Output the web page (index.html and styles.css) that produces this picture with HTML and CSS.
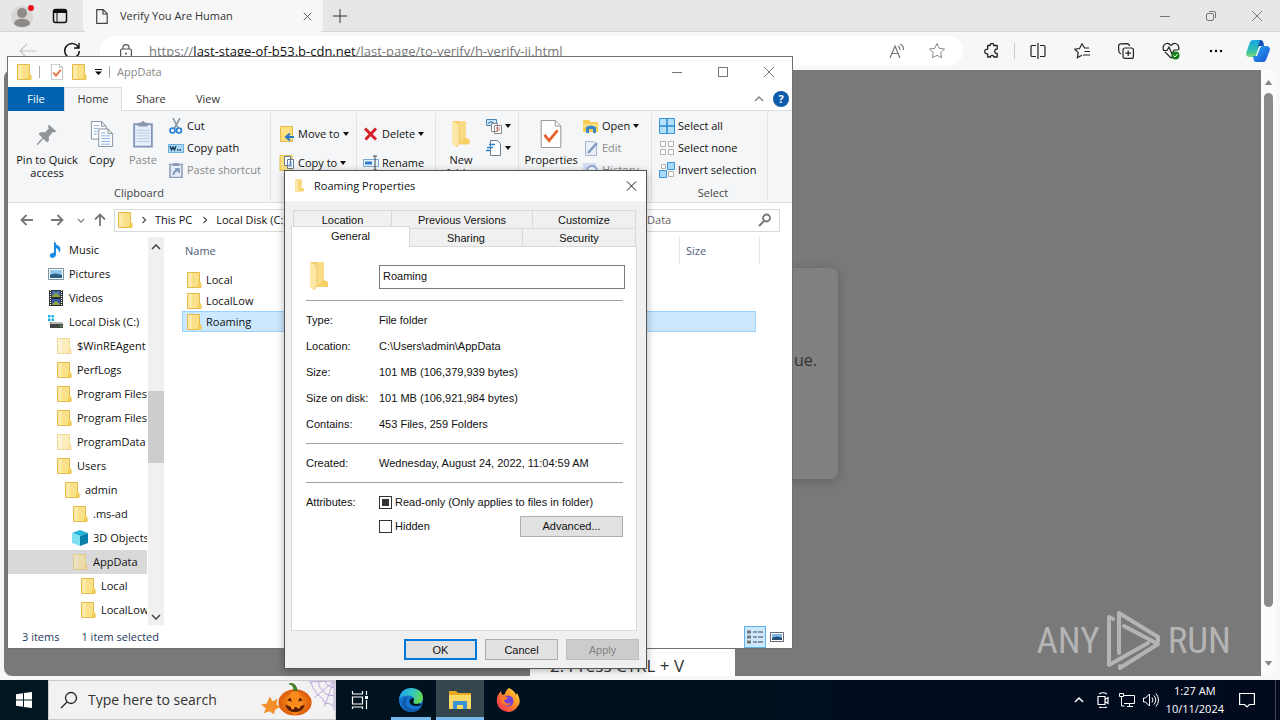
FILE: index.html
```html
<!DOCTYPE html>
<html lang="en">
<head>
<meta charset="utf-8">
<title>Desktop</title>
<link rel="stylesheet" href="styles.css">
</head>
<body>
<svg class="sprite" aria-hidden="true">
  <symbol id="folder" viewBox="-1 0 16 16"><path d="M.5.500h12v10l1.500.8v4.200H.5z" fill="#fbe08a" stroke="#e3bb4b"/><path d="M1 1h4v14H1z" fill="#fdeaa8"/><path d="M12 9.500l-1.500 6H14v-4.500z" fill="#f3cb55"/></symbol>
  <symbol id="bigfolder" viewBox="0 0 20 30"><path d="M1 1h14v18l4 2v5H1z" fill="#f3cd68"/><path d="M8 1h7v24H8z" fill="#fadb86"/><path d="M1 1l7 4v20l-3 4-4-3z" fill="#fde7a6"/><path d="M8 5v20l-3 4" fill="none" stroke="#efc763"/><path d="M14 19l5 2v5H8z" fill="#f7cf66"/></symbol>
  <symbol id="check" viewBox="0 0 24 30"><path d="M1.500.5h15l6 6v23h-21z" fill="#fff" stroke="#8d8d8d"/><path d="M16.500.5v6h6" fill="none" stroke="#8d8d8d"/><path d="M5 16l5 6L19 11" fill="none" stroke="#e4622a" stroke-width="3"/></symbol>
  <symbol id="close" viewBox="0 0 12 12"><path d="M1 1l10 10M11 1L1 11" fill="none" stroke="currentColor"/></symbol>
  <symbol id="caret" viewBox="0 0 6 4"><path d="M0 0h6L3 4z" fill="currentColor"/></symbol>
  <symbol id="up" viewBox="0 0 10 6"><path d="M1 5l4-4 4 4" fill="none" stroke="currentColor" stroke-width="1.500"/></symbol>
  <symbol id="down" viewBox="0 0 10 6"><path d="M1 1l4 4 4-4" fill="none" stroke="currentColor" stroke-width="1.500"/></symbol>
  <symbol id="right" viewBox="0 0 6 8"><path d="M1.500 1l3 3-3 3" fill="none" stroke="currentColor" stroke-width="1.300"/></symbol>
  <symbol id="arrow" viewBox="0 0 14 12"><path d="M13 6H2M6.500 1L1.500 6l5 5" fill="none" stroke="currentColor" stroke-width="1.800"/></symbol>
  <symbol id="star" viewBox="0 0 18 18"><path d="M9 1.500l2.300 4.800 5.200.7-3.800 3.600.9 5.200L9 13.300l-4.600 2.500.9-5.200L1.500 7l5.200-.7z" fill="none" stroke="currentColor" stroke-linejoin="round"/></symbol>
</svg>

<main class="desktop">
  <section class="browser">
    <header class="tabstrip">
      <svg class="avatar" viewBox="0 0 28 28"><circle cx="12" cy="15" r="11" fill="#d9d7d5"/><circle cx="12" cy="11" r="5" fill="#8d8a88"/><path d="M4 22c0-7 16-7 16 0-3 4-13 4-16 0z" fill="#8d8a88"/><circle cx="21" cy="6" r="3" fill="#e3141b"/></svg>
      <svg class="i16 tabact" viewBox="0 0 16 16"><rect x="1.500" y="1.500" width="13" height="13" rx="2" fill="none" stroke="#111" stroke-width="1.500"/><path d="M1 2h14v3H1z" fill="#111"/><path d="M5 5v9" stroke="#111"/></svg>
      <div class="btab">
        <svg class="page" viewBox="0 0 12 15"><path d="M.7.7h6.500l4 4v9.600H.7zM7 .7v4.300h4.300" fill="none" stroke="#444" stroke-width="1.200"/></svg>
        <span>Verify You Are Human</span>
        <button class="bare" aria-label="Close tab"><svg class="i9"><use href="#close"/></svg></button>
      </div>
      <button class="bare plus" aria-label="New tab"><svg class="i14" viewBox="0 0 14 14"><path d="M7 0v14M0 7h14" stroke="#333"/></svg></button>
      <div class="wctl">
        <button class="bare" aria-label="Minimize"><svg class="i12" viewBox="0 0 12 12"><path d="M1 6.500h10" stroke="#777"/></svg></button>
        <button class="bare" aria-label="Restore"><svg class="i12" viewBox="0 0 12 12"><rect x="1.500" y="3.500" width="7" height="7" rx="1.500" fill="none" stroke="#777"/><path d="M4 1.500h5q1.500 0 1.500 1.500v5" fill="none" stroke="#777"/></svg></button>
        <button class="bare" aria-label="Close"><svg class="i12"><use href="#close"/></svg></button>
      </div>
    </header>
    <div class="toolbar">
      <svg class="i18 back" viewBox="0 0 18 18"><path d="M17 9H1M8 2L1 9l7 7" fill="none" stroke="#c4c4c4" stroke-width="1.200"/></svg>
      <svg class="i18" viewBox="0 0 18 18"><path d="M15.500 5.500A7.300 7.300 0 1 0 16.300 9M16 1v5h-5" fill="none" stroke="#111" stroke-width="1.400"/></svg>
      <div class="omni">
        <svg class="lock" viewBox="0 0 12 15"><rect x=".6" y="5" width="10.800" height="9" rx="1.500" fill="none" stroke="#555" stroke-width="1.200"/><path d="M3 5V3q0-2.400 3-2.400T9 3v2" fill="none" stroke="#555" stroke-width="1.200"/><circle cx="6" cy="9.500" r="1" fill="#555"/></svg>
        <p class="url">https://<b>last-stage-of-b53.b-cdn.net</b>/last-page/to-verify/h-verify-ii.html</p>
        <svg class="i16" viewBox="0 0 16 16"><path d="M1 15L6 3l5 12M3 10.500h6M9 3q2 1 2 4M11 1q4 2 3.500 6" fill="none" stroke="#777" stroke-width="1.200"/></svg>
        <svg class="i18 grey"><use href="#star"/></svg>
      </div>
      <div class="tools">
        <svg class="i16" viewBox="0 0 16 16"><path d="M3.500 2.500H6q-.2-2 1.800-2t1.700 2h3.500V6q-2.500-.2-2.500 2.200T13 10.500V14H9.500q.2-1.500-1.600-1.500T6.300 14H3.500v-3.200Q.5 11 .5 8.500t3-2.300z" transform="translate(1.200)" fill="none" stroke="#222" stroke-width="1.300" stroke-linejoin="round"/></svg>
        <i class="tsep"></i>
        <svg class="i16" viewBox="0 0 16 16"><path d="M6 2.500H2q-1 0-1 1v9q0 1 1 1h4M8 0v16M10 2.500h4q1 0 1 1v9q0 1-1 1h-4" fill="none" stroke="#222" stroke-width="1.200"/></svg>
        <svg class="i16" viewBox="0 0 16 16"><path d="M15 5h-4.500L8 .8 5.500 5.500.8 6.300l3.400 3.400-.8 5L8 12.300M10.500 8.500H16M9 12h7" fill="none" stroke="#222" stroke-width="1.200"/></svg>
        <svg class="i16" viewBox="0 0 16 16"><rect x="5" y="5" width="10.400" height="10.400" rx="2" fill="none" stroke="#222" stroke-width="1.200"/><path d="M10.200 7.500v5.400M7.500 10.200h5.400M3 11Q1 10 .8 8L.6 3Q.6 1 2.500.8L9 .6Q11 .6 11.500 3" fill="none" stroke="#222" stroke-width="1.200"/></svg>
        <svg class="i18" viewBox="0 0 18 18"><path d="M1.500 8Q0 3 4.500 1.500 7 1 9 3.500 11 1 13.500 1.500 18 3 16.500 8M3 10l6 6 2-2M1 8.500h4l2-3.500 3 7 2-4h4" fill="none" stroke="#222" stroke-width="1.200"/><circle cx="13.500" cy="13.500" r="4" fill="#118018"/><path d="M11.500 13.500l1.500 1.500 2.500-3" fill="none" stroke="#fff"/></svg>
        <svg class="i16" viewBox="0 0 16 16"><circle cx="3" cy="8" r="1.200"/><circle cx="8" cy="8" r="1.200"/><circle cx="13" cy="8" r="1.200"/></svg>
        <svg class="i24" viewBox="0 0 24 24"><defs><linearGradient id="cp1" x1="0" y1="0" x2="0" y2="1"><stop offset="0" stop-color="#1aa5e8"/><stop offset=".6" stop-color="#2fc0b0"/><stop offset="1" stop-color="#7ad86f"/></linearGradient><linearGradient id="cp2" x1="0" y1="0" x2="1" y2="1"><stop offset="0" stop-color="#2ba9ee"/><stop offset="1" stop-color="#1a4fd8"/></linearGradient></defs><path d="M7 1h7q2 0 2.500 3l.5 3h-4l-3 9q-.5 2-3 2H4q-5 0-3.500-5L4 3q.8-2 3-2z" fill="url(#cp1)"/><path d="M14 1q3 0 3.500 3l.5 3h-5l-2 3z" fill="#1651b5"/><path d="M17 23h-7q-2 0-2.500-3L7 17h4l3-8q.7-2 3-2h3q5 0 3.500 5L20 21q-.8 2-3 2z" fill="url(#cp2)"/></svg>
      </div>
    </div>
    <div class="viewport">
      <div class="webpage">
        <div class="card"><p>continue.</p></div>
        <div class="steps"><p>2. Press CTRL + V</p></div>
        <div class="mark">
          <span>ANY</span>
          <svg viewBox="0 0 56 62"><g fill="none" stroke="#b4b4b4" stroke-width="4" stroke-linejoin="round" stroke-linecap="round"><path d="M7 9L3 7v48l39-22"/><path d="M13 43V3l39 24v4M18 16l34 18-38 24v-2"/></g></svg>
          <span>RUN</span>
        </div>
      </div>
      <div class="vscroll"><svg class="tri"><use href="#caret"/></svg><i></i><svg class="tri dn"><use href="#caret"/></svg></div>
    </div>
  </section>

  <section class="explorer">
    <header class="xtitle">
      <svg class="i16"><use href="#folder"/></svg><i class="bar"></i>
      <svg class="i16 tick"><use href="#check"/></svg>
      <svg class="i16"><use href="#folder"/></svg>
      <svg class="qa" viewBox="0 0 7 6"><path d="M0 .5h7" stroke="#111"/><path d="M0 2.500h7L3.500 6z"/></svg><i class="bar"></i>
      <span>AppData</span>
      <div class="wctl">
        <button class="bare" aria-label="Minimize"><svg class="i12" viewBox="0 0 12 12"><path d="M1 6.500h10" stroke="#777"/></svg></button>
        <button class="bare" aria-label="Maximize"><svg class="i12" viewBox="0 0 12 12"><rect x="1.500" y="1.500" width="9" height="9" fill="none" stroke="#777"/></svg></button>
        <button class="bare" aria-label="Close"><svg class="i12"><use href="#close"/></svg></button>
      </div>
    </header>
    <nav class="rtabs">
      <button class="file">File</button><button class="on">Home</button><button class="share">Share</button><button>View</button>
      <div class="rhelp"><svg class="chev"><use href="#up"/></svg><b>?</b></div>
    </nav>
    <div class="ribbon">
      <div class="group clip">
        <div class="items">
          <button class="big pin"><svg viewBox="0 0 24 30"><path d="M14 5l8 7-2 1-2 0-4 5 0 4-2 2-4-4-6 7-1-1 6-7-4-4 2-2 5 0 4-4-1-2z" fill="#8f9499"/></svg>Pin to Quick access</button>
          <button class="big copy"><svg viewBox="0 0 26 30"><g fill="#fff" stroke="#7f8a99"><path d="M1.500 1.500h11l5 5v14h-16zM12.500 1.500v5h5"/><path d="M9.500 9.500h10l5 5v14h-15zM19.500 9.500v5h5"/></g><path d="M4 6h6M4 9h5M4 12h4M4 15h4M12 14h5M12 17h10M12 20h10M12 23h10M12 26h10" stroke="#7dabe0"/></svg>Copy</button>
          <button class="big paste off"><svg viewBox="0 0 24 30"><path d="M2.500 4.500h19v24h-19z" fill="#e8eefa" stroke="#8296bd" stroke-width="2"/><path d="M7 3h2.500q2.500-4 5 0H17v4H7z" fill="#8a97ad"/><path d="M5 11h14M5 14h14M5 17h14M5 20h14M5 23h14" stroke="#b8c8e4"/></svg>Paste</button>
          <div class="stack">
            <button><svg viewBox="0 0 16 16"><path d="M5 0l5 10M12 0L6.500 10" stroke="#8a949e" stroke-width="1.600"/><circle cx="4.500" cy="12.500" r="2.500" fill="none" stroke="#1e7fd0" stroke-width="1.600"/><circle cx="11" cy="12.500" r="2.500" fill="none" stroke="#1e7fd0" stroke-width="1.600"/></svg>Cut</button>
            <button><svg viewBox="0 0 16 16"><path d="M.5 4.500h15v8H.5z" fill="#a9d8f8" stroke="#6baed9"/><path d="M2 6l1.500 4L5 7l1.500 3L8 6M9 10h1.500M11.500 10H13" fill="none" stroke="#14324f" stroke-width="1.300"/></svg>Copy path</button>
            <button class="off"><svg viewBox="0 0 16 16"><path d="M2 2.500h12v13H2z" fill="#e4eaf6" stroke="#8c9ab5" stroke-width="1.500"/><path d="M5 1h6v3H5z" fill="#8c9ab5"/><path d="M5.500 13q0-4 4-4.500M7 7h4v4" fill="none" stroke="#6e83ae" stroke-width="1.500"/></svg>Paste shortcut</button>
          </div>
        </div>
        <div class="glabel">Clipboard</div>
      </div>
      <div class="group move"><div class="stack wide">
        <button><svg viewBox="0 0 16 16"><path d="M1.500.5h12v15h-12z" fill="#fbdf80" stroke="#e3bb4b"/><path d="M15 11H8M11 7.500L7 11l4 3.500" fill="none" stroke="#2a78c8" stroke-width="2"/></svg>Move to<svg class="car"><use href="#caret"/></svg></button>
        <button><svg viewBox="0 0 16 16"><path d="M1 .5h12v15H1z" fill="#fbdf80" stroke="#e3bb4b"/><path d="M5.500 1.500h6v9h-6zM8.500 4.500h6v9h-6z" fill="#fff" stroke="#64789a"/><path d="M10 7h3M10 9h3M10 11h3" stroke="#5a9ae0"/></svg>Copy to<svg class="car"><use href="#caret"/></svg></button>
      </div></div>
      <div class="group del"><div class="stack wide">
        <button><svg viewBox="0 0 16 16"><path d="M2 2.500l11 11M13 2.500L2.500 13.500" stroke="#d5222a" stroke-width="3"/></svg>Delete<svg class="car"><use href="#caret"/></svg></button>
        <button><svg viewBox="0 0 16 16"><path d="M.5 4.500h15v7H.5z" fill="#e8f3fc" stroke="#7aa8ce"/><path d="M2 6.500h7v3H2z" fill="#2c7cc9"/><path d="M10 1h4M12 1v14M10 15h4" stroke="#444"/></svg>Rename</button>
      </div></div>
      <div class="group new"><div class="items">
        <button class="big nf"><svg viewBox="0 0 20 30"><use href="#bigfolder"/></svg>New folder</button>
        <div class="stack">
          <button aria-label="New item"><svg viewBox="0 0 16 16"><path d="M.5 1.500h10v6H.5z" fill="#c9e4f8" stroke="#4b86b4"/><path d="M2 5.500l3-2 3 2" fill="none" stroke="#2b6ba0"/><path d="M5.500 5.500h6v8h-6zM8.500 7.500h7v8h-7z" fill="#fff" stroke="#8a8a8a"/><path d="M10 10h4M10 12h4" stroke="#d58070"/></svg><svg class="car"><use href="#caret"/></svg></button>
          <button aria-label="Easy access"><svg viewBox="0 0 16 16"><path d="M4.500.5h7l3 3v12h-10z" fill="#fff" stroke="#6d7f92"/><path d="M3 4.500h6M1 7.500h6M0 10.500h4" stroke="#2684cc" stroke-width="1.500"/></svg><svg class="car"><use href="#caret"/></svg></button>
        </div>
      </div></div>
      <div class="group open"><div class="items">
        <button class="big props"><svg viewBox="0 0 24 30"><use href="#check"/></svg>Properties</button>
        <div class="stack">
          <button><svg viewBox="0 0 16 16"><path d="M0 2h6l1.500 2H15v10H0z" fill="#f7cd52"/><path d="M0 6h16v3H0z" fill="#fbe08a"/><path d="M3 15V9q5-3 10 0v6h-3v-4H6v4z" fill="#3b86c8"/></svg>Open<svg class="car"><use href="#caret"/></svg></button>
          <button class="off"><svg viewBox="0 0 16 16"><path d="M2.500 1.500h8l3 3v11h-11z" fill="#e9eef8" stroke="#a8b4cb"/><path d="M5 13l9-10" stroke="#7f9ac6" stroke-width="2.500"/></svg>Edit</button>
          <button class="off"><svg viewBox="0 0 16 16"><path d="M0 1h13v13H0z" fill="#d3def2"/><circle cx="9" cy="9" r="5" fill="#f4f7fc" stroke="#8fa5cf" stroke-width="2"/></svg>History</button>
        </div>
      </div></div>
      <div class="group sel">
        <div class="stack">
          <button><svg viewBox="0 0 16 16"><path d="M.5.5h15v15H.5z" fill="#b5e0fb" stroke="#3a94d6"/><path d="M8 0v16M0 8h16" stroke="#2c88cd" stroke-width="1.500"/></svg>Select all</button>
          <button><svg viewBox="0 0 16 16"><path d="M1.500 1.500h5v5h-5zM9.500 1.500h5v5h-5zM1.500 9.500h5v5h-5zM9.500 9.500h5v5h-5z" fill="#fff" stroke="#b2b2b2"/></svg>Select none</button>
          <button><svg viewBox="0 0 16 16"><path d="M2.500 2.500h4v4h-4zM9.500 9.500h5v5h-5z" fill="#fff" stroke="#b2b2b2"/><path d="M8.500.5h7v7h-7zM.5 8.500h7v7h-7z" fill="#a9dafa" stroke="#3a94d6"/></svg>Invert selection</button>
        </div>
        <div class="glabel">Select</div>
      </div>
    </div>
    <div class="address">
      <svg class="nav"><use href="#arrow"/></svg>
      <svg class="nav fwd"><use href="#arrow"/></svg>
      <svg class="mini"><use href="#down"/></svg>
      <svg class="nav upw"><use href="#arrow"/></svg>
      <div class="crumbs"><svg class="i16"><use href="#folder"/></svg><svg class="sep"><use href="#right"/></svg><span>This PC</span><svg class="sep"><use href="#right"/></svg><span>Local Disk (C:)</span></div>
      <div class="find"><input type="text" aria-label="Search AppData" placeholder="Search AppData"><svg class="i14" viewBox="0 0 14 14"><circle cx="8.500" cy="5" r="3.500" fill="none" stroke="#777" stroke-width="1.800"/><path d="M6 8l-5 5" stroke="#777" stroke-width="2"/></svg></div>
    </div>
    <div class="xbody">
      <ul class="tree">
        <li><svg viewBox="0 0 16 16"><path d="M7 0q1 3 4 4 3 3 0 7 0-4-3-5v7q-1 3-4 3-3-1-2-3.500 2-2.500 4-1.500V0z" fill="#1a8be0"/></svg>Music</li>
        <li><svg viewBox="0 0 16 16"><path d="M.5 2.500h15v11H.5z" fill="#fff" stroke="#7d92a3"/><path d="M2 4h12v8H2z" fill="#8fc6ef"/><path d="M2 9q4-3 12 0v3H2z" fill="#2b5f86"/></svg>Pictures</li>
        <li><svg viewBox="0 0 16 16"><path d="M1 0h14v16H1z" fill="#272d35"/><path d="M2.500 0v16M13.500 0v16" stroke="#fff" stroke-width="1.200" stroke-dasharray="1 1"/><path d="M4 1h8v6H4z" fill="#4f6fae"/><path d="M4 9h8v6H4z" fill="#3c5da8"/><path d="M4 6l4-3 4 3v1H4zM4 14l4-3 4 3v1H4z" fill="#8fa540"/></svg>Videos</li>
        <li><svg viewBox="0 0 16 16"><path d="M0 1h2.500v2.500H0zM3.500 1H6v2.500H3.500zM0 4.500h2.500V7H0zM3.500 4.500H6V7H3.500z" fill="#20b2e0"/><path d="M2 8h11l2 2v4H2v-4z" fill="#444"/><path d="M3 8h10l2 2H2z" fill="#b8b8b8"/><path d="M12 12h2" stroke="#60e060"/></svg>Local Disk (C:)</li>
        <li class="l1 dim"><svg><use href="#folder"/></svg>$WinREAgent</li>
        <li class="l1"><svg><use href="#folder"/></svg>PerfLogs</li>
        <li class="l1"><svg><use href="#folder"/></svg>Program Files</li>
        <li class="l1"><svg><use href="#folder"/></svg>Program Files (x86)</li>
        <li class="l1 dim"><svg><use href="#folder"/></svg>ProgramData</li>
        <li class="l1"><svg><use href="#folder"/></svg>Users</li>
        <li class="l2"><svg><use href="#folder"/></svg>admin</li>
        <li class="l3"><svg><use href="#folder"/></svg>.ms-ad</li>
        <li class="l3"><svg viewBox="0 0 16 16"><path d="M8 0l8 3-8 3-8-3z" fill="#26b5dc"/><path d="M0 3l8 3v10l-8-3z" fill="#7fe0f2"/><path d="M16 3L8 6v10l8-3z" fill="#087fa8"/></svg>3D Objects</li>
        <li class="l3 dim cur"><svg><use href="#folder"/></svg>AppData</li>
        <li class="l4"><svg><use href="#folder"/></svg>Local</li>
        <li class="l4"><svg><use href="#folder"/></svg>LocalLow</li>
      </ul>
      <div class="tscroll"><svg class="chev"><use href="#up"/></svg><i></i><svg class="chev"><use href="#down"/></svg></div>
      <table class="files">
        <colgroup><col class="cname"><col class="csize"><col class="cend"></colgroup>
        <thead><tr><th>Name</th><th>Size</th><th></th></tr></thead>
        <tbody>
          <tr><td><span><svg class="i16"><use href="#folder"/></svg>Local</span></td><td></td></tr>
          <tr><td><span><svg class="i16"><use href="#folder"/></svg>LocalLow</span></td><td></td></tr>
          <tr class="picked"><td><span><svg class="i16"><use href="#folder"/></svg>Roaming</span></td><td></td></tr>
        </tbody>
      </table>
    </div>
    <footer class="status"><span>3 items</span><span>1 item selected</span>
      <div class="views">
        <button class="act" aria-label="Details view"><svg viewBox="0 0 18 16"><path d="M1 3h4M1 8h4M1 13h4" stroke="#777" stroke-width="3"/><path d="M7 3h4M12 3h5M7 8h4M12 8h5M7 13h4M12 13h5" stroke="#444"/></svg></button>
        <button aria-label="Thumbnail view"><svg viewBox="0 0 18 16"><path d="M2.500 3.500h13v9h-13z" fill="#fff" stroke="#667"/><path d="M4 5h10v6H4z" fill="#7db7e6"/><path d="M4 9q5-3 10 0v2H4z" fill="#244e78"/></svg></button>
      </div>
    </footer>
  </section>

  <section class="dialog" role="dialog" aria-label="Roaming Properties">
    <header class="dtitle"><svg viewBox="0 0 20 30"><use href="#bigfolder"/></svg><span>Roaming Properties</span><button class="bare" aria-label="Close"><svg class="i12"><use href="#close"/></svg></button></header>
    <div class="dbody">
      <div class="dtabs top"><button>Location</button><button>Previous Versions</button><button>Customize</button></div>
      <div class="dtabs low"><button class="on">General</button><button>Sharing</button><button>Security</button></div>
      <div class="panel">
        <div class="nrow"><label for="nm"><svg viewBox="0 0 20 30"><use href="#bigfolder"/></svg></label><input id="nm" type="text" value="Roaming" aria-label="Name"></div>
        <dl><dt>Type:</dt><dd>File folder</dd><dt>Location:</dt><dd>C:\Users\admin\AppData</dd><dt>Size:</dt><dd>101 MB (106,379,939 bytes)</dd><dt>Size on disk:</dt><dd>101 MB (106,921,984 bytes)</dd><dt>Contains:</dt><dd>453 Files, 259 Folders</dd></dl>
        <dl><dt>Created:</dt><dd>Wednesday, August 24, 2022, 11:04:59 AM</dd></dl>
        <div class="attrs"><span>Attributes:</span>
          <label class="ro"><input type="checkbox" class="part">Read-only (Only applies to files in folder)</label>
          <label class="hid"><input type="checkbox">Hidden</label>
          <button class="push adv">Advanced...</button>
        </div>
      </div>
      <div class="dbtns"><button class="push def">OK</button><button class="push">Cancel</button><button class="push" disabled>Apply</button></div>
    </div>
  </section>
</main>

<footer class="taskbar">
  <button class="start" aria-label="Start"><svg class="i16" viewBox="0 0 16 16"><path d="M0 2.300L7 1.300V7.500H0zM8 1.100L16 0v7.500H8zM0 8.500h7v6.200l-7-1zM8 8.500h8V16l-8-1.100z" fill="#fff"/></svg></button>
  <div class="tsearch">
    <svg class="i18" viewBox="0 0 18 18"><circle cx="11" cy="7" r="5.500" fill="none" stroke="#222" stroke-width="1.300"/><path d="M7 11l-6 6" stroke="#222" stroke-width="1.300"/></svg>
    <input type="text" aria-label="Search" placeholder="Type here to search">
    <svg class="pump" viewBox="0 0 76 39"><defs><radialGradient id="pk"><stop offset="0" stop-color="#ffa01f"/><stop offset="1" stop-color="#dc5a0a"/></radialGradient></defs><g fill="none" stroke="#b9a3dc"><path d="M76 0L50 1M76 0L56 17M76 0L66 26M76 0v30M60 1q0 6 4 8 2 6 12 6M67 0q0 5 9 7M52 1q2 7 7 13 5 2 8 9 4-1 9 3"/></g><path d="M10 16l3 5 5-3-1 6 4 3-5 2-2 5-4-3-6 2 2-5-5-4 6-1z" fill="#f2902a"/><ellipse cx="36" cy="22" rx="17" ry="13.500" fill="url(#pk)"/><path d="M36 10q-8 3-8 12t8 13q8-4 8-13t-8-12z" fill="#f98a1c"/><path d="M35 10q0-6-5-7 7-2 8 7z" fill="#4e8a2c" stroke="#3b7422"/><path d="M28 20l3-3 2 4zM39 21l2-4 3 3zM26 24q10 6 20 0-2 8-10 8t-10-8z" fill="#5a1c06"/><path d="M32 26h3v3h-3zM38 26h3v2h-3z" fill="#ff9b21"/></svg>
  </div>
  <button class="app" aria-label="Task View"><svg class="i18" viewBox="0 0 18 18"><path d="M1.500 0v3h10V0M1.500 6h10v7h-10zM1.500 18v-2h10v2M15.500 0v4M15.500 9v9" fill="none" stroke="#fff" stroke-width="1.200"/><path d="M14 5h3v3h-3z" fill="#fff"/></svg></button>
  <button class="app run" aria-label="Edge"><svg class="i24" viewBox="0 0 24 24"><defs><linearGradient id="eg" x1="0" y1="0" x2="1" y2=".3"><stop offset="0" stop-color="#1b9ff0"/><stop offset=".6" stop-color="#33c6c0"/><stop offset="1" stop-color="#62d957"/></linearGradient></defs><circle cx="12" cy="12" r="12" fill="#1474cf"/><path d="M0 11Q2 0 12.500 0 24 1 24 10q-.5 6-7 6-4-.5-2.500-3 2-5-4.500-5.500Q3 7 0 11z" fill="url(#eg)"/><path d="M10 8q-5 4-2 10 5 6 13 2l2-2q-3 6-11 6-7-1-9-8 0-7 7-8z" fill="#105aac"/><path d="M14.500 10q-4 0-4 4 1 4 7 4 3 0 5-1.500l-2-1q-7 1.500-6-2 1-1.500 0-3.500z" fill="#001620"/></svg></button>
  <button class="app focus" aria-label="File Explorer"><svg class="i24" viewBox="0 0 24 24"><path d="M1 3h7l2 2h13v5H1z" fill="#e8a820"/><path d="M1 7h22v14H1z" fill="#fcd867"/><path d="M5 21v-7q0-1 1-1h12q1 0 1 1v7h-4v-4H9v4z" fill="#3b91d3"/></svg></button>
  <button class="app" aria-label="Firefox"><svg class="i24" viewBox="0 0 24 24"><defs><linearGradient id="ff" x1="1" y1="0" x2="0" y2="1"><stop offset="0" stop-color="#fff04a"/><stop offset=".4" stop-color="#ff9326"/><stop offset="1" stop-color="#f1205c"/></linearGradient></defs><path d="M13 0q6 3 7 7l1-2q5 8 1 13-4 6-10 6Q3 23 1 15 0 8 5 3l1 4 3-1q0-3 4-6z" fill="url(#ff)"/><circle cx="12" cy="13" r="5.500" fill="#7541d4"/><path d="M5 9q4-2 7 1-2 2-4 2 1 5 7 3-3 5-8 1-3-3-2-7z" fill="#ff7b2b"/></svg></button>
  <div class="tray">
    <svg class="chev"><use href="#up"/></svg>
    <svg class="i16" viewBox="0 0 16 16"><path d="M3 4.500h7v8H3zM10 7.500l3-2v6l-3-2M4 2q4-2.500 8 0M4 15q4 1.500 8 0" fill="none" stroke="#fff" stroke-width="1.200"/></svg>
    <svg class="i16" viewBox="0 0 16 16"><path d="M5 3.500h10.500v8H5M8 14.500h6M10.500 11.500v3M.5 1.500h4v3h-4zM2.500 5v9h3" fill="none" stroke="#fff"/></svg>
    <svg class="i16" viewBox="0 0 16 16"><path d="M.5 6h2l4-4v12l-4-4h-2zM9 5.500q2 2.500 0 5M11 3.500q3.500 4.500 0 9M13 1.500q5 6.500 0 13" fill="none" stroke="#fff"/></svg>
    <p class="clock"><span>1:27 AM</span><span>10/11/2024</span></p>
    <svg class="i16 note" viewBox="0 0 16 16"><path d="M.6 1.500h14.800v11h-5L8 15l-2.400-2.500h-5z" fill="none" stroke="#fff" stroke-width="1.200"/></svg>
  </div>
</footer>
</body>
</html>
```
FILE: styles.css
```css
* { box-sizing: border-box; }
body { margin: 0; height: 100vh; display: flex; flex-direction: column; overflow: hidden; font: 11px/16px "Open Sans", "Noto Sans", sans-serif; color: #111; }
button, input { font: inherit; color: inherit; margin: 0; }
button { border: 0; background: none; padding: 0; white-space: nowrap; }
p, ul, dl, dd { margin: 0; padding: 0; }
svg { flex: none; display: block; }
.sprite { display: none; }
.i9 { width: 9px; height: 9px; }
.i12 { width: 12px; height: 12px; }
.i14 { width: 14px; height: 14px; }
.i16 { width: 16px; height: 16px; }
.i18 { width: 18px; height: 18px; }
.i24 { width: 24px; height: 24px; }
.bare { display: flex; align-items: center; justify-content: center; }
.chev { width: 10px; height: 6px; }
.desktop { flex: 1; min-height: 0; position: relative; display: flex; }

/* browser */
.browser { flex: 1; min-width: 0; display: flex; flex-direction: column; background: #f7f7f7; }
.tabstrip { height: 32px; background: #e7e7e7; display: flex; align-items: center; border-bottom: 1px solid #d6d6d6; }
.avatar { width: 28px; height: 28px; margin-left: 10px; }
.tabact { margin-left: 14px; }
.btab { align-self: stretch; margin: 0 0 -1px 15px; width: 240px; padding: 0 11px 0 13px; background: #f7f7f7; display: flex; align-items: center; gap: 12px; border-radius: 0 0 4px 4px; color: #333; }
.btab .bare { margin-left: auto; }
.page { width: 12px; height: 15px; }
.plus { width: 34px; }
.wctl { margin-left: auto; display: flex; align-self: stretch; color: #777; }
.wctl .bare { width: 46px; }
.toolbar { height: 38px; display: flex; align-items: center; padding-right: 10px; }
.back { margin: 0 26px 0 19px; }
.omni { flex: 1; height: 30px; margin-left: 19px; padding: 0 17px 0 20px; border-radius: 15px; background: #fff; display: flex; align-items: center; gap: 23px; }
.lock { width: 12px; height: 15px; margin-right: -6px; }
.url { flex: 1; font-size: 13px; color: #777; }
.url b { font-weight: normal; color: #111; }
.grey { color: #888; }
.tools { display: flex; align-items: center; gap: 28px; padding-left: 20px; }
.tools .i24 { margin-left: -6px; }
.tsep { width: 1px; height: 16px; margin: 0 -13px; background: #ccc; }
.viewport { flex: 1; min-height: 0; display: flex; padding: 0 4px 4px; }
.webpage { flex: 1; position: relative; overflow: hidden; background: #797979; border-radius: 8px 0 0 8px; display: flex; justify-content: center; }
.card { align-self: flex-start; width: 411px; height: 211px; margin-top: 198px; padding: 80px 21px 0 0; border-radius: 8px; background: #808080; box-shadow: 0 2px 12px #606060; text-align: right; font-size: 16px; line-height: 24px; color: #333; }
.steps { position: absolute; left: 526px; bottom: 0; width: 205px; padding: 8px 20px 0; background: #fff; font-size: 17px; line-height: 20px; color: #333; height: 28px; }
.mark { position: absolute; right: 30px; bottom: 4px; display: flex; align-items: center; gap: 6px; color: #b4b4b4; font: 37px/62px "Liberation Sans Narrow", "Roboto Condensed", "Roboto", sans-serif; }
.mark svg { width: 56px; height: 62px; }
.vscroll { width: 15px; background: #fcfcfc; border-radius: 0 8px 8px 0; padding: 10px 0; display: flex; flex-direction: column; align-items: center; gap: 8px; color: #888; }
.vscroll i { flex: 1; width: 9px; margin-bottom: 46px; border-radius: 5px; background: #8a8a8a; }
.tri { width: 9px; height: 5px; transform: rotate(180deg); }
.tri.dn { transform: none; }

/* file explorer */
.explorer { position: absolute; left: 7px; top: 56px; bottom: 31px; width: 786px; display: flex; flex-direction: column; border: 1px solid #707070; background: #fff; }
.xtitle { height: 30px; display: flex; align-items: center; padding-left: 8px; gap: 8px; color: #888; }
.xtitle .tick { margin: 0 -2px 0 1px; }
.xtitle .bar { width: 1px; height: 12px; background: #aaa; margin-left: -1px; }
.xtitle span { margin-left: -1px; }
.qa { width: 7px; height: 6px; }
.rtabs { height: 24px; display: flex; border-bottom: 1px solid #dcdde0; color: #333; }
.rtabs button { width: 56px; margin-bottom: -1px; }
.rtabs .file { background: #0063b1; color: #fff; }
.rtabs .on { width: 58px; padding-bottom: 1px; border: 1px solid #dcdde0; border-bottom: 0; background: #f5f6f7; }
.rtabs .share { width: 58px; }
.rhelp { margin-left: auto; display: flex; align-items: center; gap: 9px; padding-right: 3px; color: #888; }
.rhelp b { width: 16px; height: 16px; border-radius: 8px; background: #0d5cab; color: #fff; text-align: center; }
.ribbon { height: 92px; display: flex; background: #f5f6f7; border-bottom: 1px solid #dcdde0; overflow: hidden; padding: 2px 0; }
.group { border-right: 1px solid #e1e2e4; display: flex; flex-direction: column; height: 88px; }
.clip { width: 263px; }
.move { width: 86px; padding-left: 8px; }
.del { width: 79px; padding-left: 6px; }
.new { width: 83px; }
.open { width: 133px; }
.sel { width: 116px; padding-left: 7px; }
.items { display: flex; }
.glabel { text-align: center; margin-top: auto; color: #444; }
.stack { display: flex; flex-direction: column; padding-top: 2px; }
.stack button { display: flex; align-items: center; gap: 3px; height: 22px; }
.stack svg { width: 16px; height: 16px; }
.stack .car { width: 6px; height: 4px; }
.wide { padding-top: 9px; gap: 5px; }
.wide button { height: 24px; }
.big { display: flex; flex-direction: column; align-items: center; white-space: normal; line-height: 13px; gap: 4px; padding-top: 6px; }
.big svg { width: 24px; height: 30px; padding: 1px 0; }
.pin { width: 78px; padding-left: 6px; padding-right: 6px; }
.copy { width: 32px; }
.paste { width: 50px; }
.props { width: 64px; }
.nf { width: 50px; }
.off { color: #8a8a8a; }
.address { height: 34px; display: flex; align-items: center; padding: 0 12px 0 12px; color: #777; }
.nav { width: 14px; height: 12px; }
.fwd { margin-left: 16px; transform: rotate(180deg); }
.upw { margin-left: 8px; transform: rotate(90deg); }
.mini { width: 8px; height: 5px; margin-left: 13px; }
.crumbs { flex: 1; height: 23px; margin: 0 6px 0 7px; border: 1px solid #d9d9d9; display: flex; align-items: center; gap: 8px; padding-left: 2px; color: #111; }
.crumbs .sep { width: 6px; height: 8px; color: #555; }
.crumbs span { margin-right: 2px; }
.find { width: 200px; height: 23px; border: 1px solid #d9d9d9; display: flex; align-items: center; padding: 0 7px 0 8px; }
.find input { flex: 1; min-width: 0; border: 0; padding: 0; background: none; outline: 0; }
.find input::placeholder { color: #666; }
.xbody { flex: 1; min-height: 0; display: flex; }
.tree { width: 139px; padding-top: 1px; overflow: hidden; list-style: none; color: #111; }
.tree li { height: 24px; display: flex; align-items: center; gap: 5px; padding-left: 40px; white-space: nowrap; }
.tree svg { width: 16px; height: 16px; }
.tree .l1 { padding-left: 48px; }
.tree .l2 { padding-left: 56px; }
.tree .l3 { padding-left: 64px; }
.tree .l4 { padding-left: 72px; }
.dim svg { opacity: .55; }
.tree .cur { background: #d9d9d9; }
.tscroll { width: 16px; margin-left: 1px; background: #f0f0f0; display: flex; flex-direction: column; align-items: center; padding: 7px 0 5px; color: #444; }
.tscroll i { align-self: stretch; height: 72px; margin: 141px 0 auto; background: #cdcdcd; }
.files { width: 578px; margin-left: 18px; table-layout: fixed; border-collapse: separate; border-spacing: 0; align-self: flex-start; }
.cname { width: 498px; }
.csize { width: 76px; }
.cend { width: 4px; }
.files th { height: 27px; padding: 0 3px; text-align: left; font-weight: normal; color: #4c5a75; border-right: 1px solid #e5e5e5; }
.files th:nth-child(2) { border: 0; padding-left: 6px; }
.files th:last-child { padding: 0; }
.files thead::after { content: ""; display: block; height: 5px; }
.files td { height: 21px; padding: 0 4px; border: 1px solid transparent; border-width: 1px 0; }
.files td span { display: flex; align-items: center; gap: 4px; height: 19px; }
.picked td { background: #cce8ff; border-color: #99d1ff; }
.picked td:first-child { border-left-width: 1px; padding-left: 3px; }
.picked td:last-child { border-right-width: 1px; }
.status { height: 23px; display: flex; align-items: center; gap: 22px; padding-left: 14px; color: #1e395b; }
.views { margin-left: auto; display: flex; padding-right: 4px; }
.views button { width: 22px; height: 22px; padding: 2px; }
.views svg { width: 18px; height: 16px; }
.views .act { background: #cce8ff; border: 1px solid #60b0e8; padding: 1px; }

/* properties dialog */
.dialog { position: absolute; left: 284px; top: 170px; width: 363px; border: 1px solid #555; background: #f0f0f0; box-shadow: 0 2px 8px rgba(0, 0, 0, .3); font-family: "Liberation Sans", sans-serif; }
.dtitle { height: 30px; background: #fff; display: flex; align-items: center; padding: 0 9px; gap: 9px; font-family: "Open Sans", sans-serif; }
.dtitle svg:first-child { width: 11px; height: 14px; }
.dtitle .bare { margin-left: auto; color: #000; }
.dbody { padding: 9px 7px 8px 6px; }
.dtabs { display: flex; margin-right: 3px; }
.dtabs button { border: 1px solid #d9d9d9; border-bottom: 0; border-left-width: 0; height: 18px; line-height: 16px; }
.dtabs button:first-child { border-left-width: 1px; }
.top { padding-left: 2px; }
.top button:nth-child(1) { width: 99px; }
.top button:nth-child(2) { width: 141px; }
.top button:nth-child(3) { flex: 1; }
.low { align-items: flex-end; }
.low button:nth-child(1) { width: 119px; }
.low button:nth-child(2) { width: 113px; }
.low button:nth-child(3) { flex: 1; }
.low .on { height: 21px; margin: -2px 0 -1px; padding-bottom: 2px; background: #fff; z-index: 1; }
.panel { min-height: 385px; margin-right: 2px; padding: 18px 11px 0 14px; border: 1px solid #d9d9d9; background: #fff; }
.nrow { display: grid; grid-template-columns: 73px 1fr; height: 35px; align-items: start; }
.nrow svg { width: 26px; height: 30px; margin-top: -4px; }
.nrow input { width: 100%; height: 24px; border: 1px solid #7a7a7a; padding: 0 3px 3px; outline: 0; }
.panel dl { display: grid; grid-template-columns: 73px 1fr; line-height: 26px; border-top: 1px solid #a0a0a0; padding: 6px 0; margin-right: 2px; }
.attrs { display: grid; grid-template-columns: 73px 1fr 103px; grid-auto-rows: 24px; align-items: center; border-top: 1px solid #a0a0a0; padding-top: 7px; margin-right: 2px; }
.attrs label { display: flex; align-items: center; gap: 3px; white-space: nowrap; }
.attrs input { appearance: none; width: 13px; height: 13px; border: 1px solid #333; background: #fff; }
.attrs .part { background: #333; box-shadow: inset 0 0 0 2px #fff; }
.ro { grid-column: 2 / 4; }
.hid { grid-column: 2; }
.push { height: 21px; width: 73px; border: 1px solid #adadad; background: #e1e1e1; }
.adv { width: 103px; }
.push:disabled { background: #ccc; border-color: #bfbfbf; color: #838383; }
.def { border: 2px solid #0078d7; }
.dbtns { display: flex; justify-content: flex-end; gap: 8px; padding-top: 8px; }

/* taskbar */
.taskbar { height: 40px; display: flex; background: linear-gradient(90deg, #001620, #020a1e); color: #fff; }
.start, .app { width: 48px; display: flex; align-items: center; justify-content: center; }
.app { border-bottom: 3px solid transparent; border-top: 3px solid transparent; }
.run { width: 40px; margin: 0 5px 0 7px; border-bottom-color: #76b9ed; }
.focus { background: #34474f; border-bottom-color: #76b9ed; border-top-color: #34474f; }
.tsearch { width: 288px; background: #f2f2f2; border: 1px solid #ccc; display: flex; align-items: center; gap: 10px; padding-left: 11px; color: #222; }
.tsearch input { flex: 1; min-width: 0; border: 0; padding: 0; background: none; outline: 0; font-size: 14px; }
.tsearch input::placeholder { color: #333; }
.pump { width: 76px; height: 38px; }
.tray { margin-left: auto; display: flex; align-items: center; gap: 8px; padding-right: 4px; margin-right: 4px; border-right: 1px solid #445; }
.tray .chev { margin-right: 3px; }
.clock { display: flex; flex-direction: column; align-items: center; line-height: 18px; margin-left: -1px; }
.note { margin: 0 16px 0 7px; }
```
